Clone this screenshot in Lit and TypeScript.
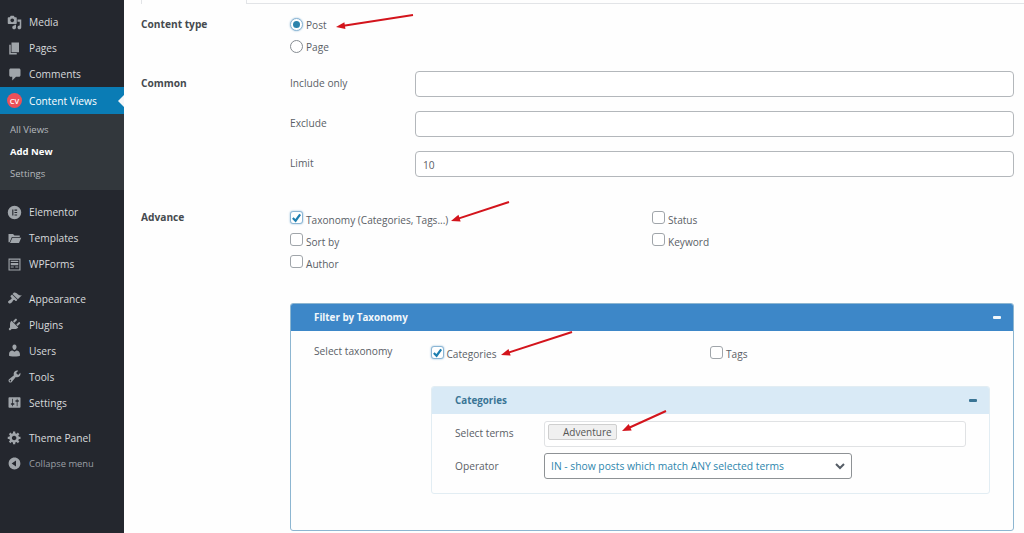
import { LitElement, html, css, svg } from "lit";
import { customElement } from "lit/decorators.js";

const P: Record<string, string> = {
  media: "M13 11V4c0-.55-.45-1-1-1h-1.67L9 1H5L3.67 3H2c-.55 0-1 .45-1 1v7c0 .55.45 1 1 1h10c.55 0 1-.45 1-1zM7 4.5c1.38 0 2.5 1.12 2.5 2.5S8.38 9.5 7 9.5 4.5 8.38 4.5 7 5.62 4.5 7 4.5zM14 6h5v10.5c0 1.38-1.12 2.5-2.5 2.5S14 17.88 14 16.5s1.12-2.5 2.5-2.5c.17 0 .34.02.5.05V9h-3V6zm-4 8.05V13h2v3.5c0 1.38-1.12 2.5-2.5 2.5S7 17.88 7 16.5 8.12 14 9.5 14c.17 0 .34.02.5.05z",
  pages: "M6 15V2h10v13H6zm-1 1h8v2H3V5h2v11z",
  comments: "M5 2h11c1.1 0 2 .9 2 2v7c0 1.1-.9 2-2 2h-4l-5 5v-5H5c-1.1 0-2-.9-2-2V4c0-1.1.9-2 2-2z",
  elementor: "M10 1a9 9 0 1 0 0 18 9 9 0 0 0 0-18zM7 6h1.5v8H7V6zm3 0h3.5v1.5H10V6zm0 3.2h3.5v1.5H10V9.200zm0 3.300h3.500V14H10v-1.500z",
  templates: "M2 4h6l2 2h7v2H6.500L3.500 15H2V4zm5.200 5H19l-3 7H4l3.200-7z",
  wpforms: "M2 2h16v16H2V2zm1.500 1.500v13h13v-13h-13zM5 5h10v1.500H5V5zm0 3h10v3H5V8zm0 4.500h4V14H5v-1.500zm6 0h4V14h-4v-1.500z",
  appearance: "M14.48 11.06L7.41 3.99l1.5-1.5c.5-.56 2.3-.47 3.51.32 1.21.8 1.43 1.28 2.91 2.1 1.18.64 2.45 1.26 4.45.85zm-.71.71L6.7 4.7 4.93 6.47c-.39.39-.39 1.02 0 1.41l1.06 1.06c.39.39.39 1.03 0 1.42-.6.6-1.43 1.11-2.21 1.69-.35.26-.7.53-1.01.84C1.43 13.23.87 14.81 2.1 16.04c1.23 1.23 2.81.67 4.15-.67.31-.31.58-.66.85-1.02.57-.78 1.08-1.61 1.69-2.21.39-.39 1.02-.39 1.41 0l1.06 1.06c.39.39 1.02.39 1.41 0z",
  plugins: "M13.11 4.36L9.87 7.6 8 5.73l3.24-3.24c.35-.34 1.05-.2 1.56.32.52.51.66 1.21.31 1.55zm-8 1.77l.91-1.12 9.01 9.01-1.19.84c-.71.71-2.63 1.16-3.82 1.16H6.14L4.9 17.26c-.59.59-1.54.59-2.12 0-.59-.58-.59-1.53 0-2.12l1.24-1.24v-3.88c0-1.13.4-3.19 1.09-3.89zm7.26 3.97l3.24-3.24c.34-.35 1.04-.21 1.55.31.52.51.66 1.21.31 1.55l-3.24 3.25z",
  users: "M10 9.25c-2.27 0-2.73-3.44-2.73-3.44C7 4.02 7.82 2 9.97 2c2.16 0 2.98 2.02 2.71 3.81 0 0-.41 3.44-2.68 3.44zm0 2.57L12.72 10c2.39 0 4.52 2.33 4.52 4.53v2.49s-3.65 1.13-7.24 1.13c-3.65 0-7.24-1.13-7.24-1.13v-2.49c0-2.25 1.94-4.48 4.47-4.48z",
  tools: "M16.68 9.77c-1.34 1.34-3.3 1.67-4.95.99l-5.41 6.52c-.99.99-2.59.99-3.58 0s-.99-2.59 0-3.57l6.52-5.42c-.68-1.65-.35-3.61.99-4.95 1.28-1.28 3.12-1.62 4.72-1.06l-2.89 2.89 2.82 2.82 2.86-2.87c.53 1.58.18 3.39-1.08 4.65zM3.81 16.21c.4.39 1.04.39 1.43 0 .4-.4.4-1.04 0-1.43-.39-.4-1.03-.4-1.43 0-.39.39-.39 1.03 0 1.43z",
  settings: "M18 16V4c0-.55-.45-1-1-1H3c-.55 0-1 .45-1 1v12c0 .55.45 1 1 1h14c.55 0 1-.45 1-1zM8 11h1c.55 0 1 .45 1 1s-.45 1-1 1H8v1.5c0 .28-.22.5-.5.5s-.5-.22-.5-.5V13H6c-.55 0-1-.45-1-1s.45-1 1-1h1V5.5c0-.28.22-.5.5-.5s.5.22.5.5V11zm5-2h-1c-.55 0-1-.45-1-1s.45-1 1-1h1V5.5c0-.28.22-.5.5-.5s.5.22.5.5V7h1c.55 0 1 .45 1 1s-.45 1-1 1h-1v5.5c0 .28-.22.5-.5.5s-.5-.22-.5-.5V9z",
  gear: "M18 12h-2.18c-.17.7-.44 1.35-.81 1.93l1.54 1.54-2.1 2.1-1.54-1.54c-.58.36-1.23.63-1.91.79V19H8v-2.18c-.68-.16-1.33-.43-1.91-.79l-1.54 1.54-2.12-2.12 1.54-1.54c-.36-.58-.63-1.23-.79-1.91H1V9.03h2.17c.16-.7.44-1.35.8-1.94L2.43 5.55l2.1-2.1 1.54 1.54c.58-.37 1.24-.64 1.93-.81V2h3v2.18c.68.16 1.33.43 1.91.79l1.54-1.54 2.12 2.12-1.54 1.54c.36.59.64 1.24.8 1.94H18V12zm-8.5 1.5c1.66 0 3-1.34 3-3s-1.34-3-3-3-3 1.34-3 3 1.34 3 3 3z",
  collapse: "M10 2.16c4.33 0 7.84 3.51 7.84 7.84s-3.51 7.84-7.84 7.84S2.16 14.33 2.16 10 5.71 2.16 10 2.16zm2 11.72V6.12L6.18 9.97z",
};

const icon = (k: string) =>
  html`<svg class="ico" viewBox="0 0 20 20"><path fill-rule="evenodd" d=${P[k]}></path></svg>`;

const arrows: [number, number, number, number][] = [
  [413, 15, 336, 27],
  [509, 202, 451, 221],
  [572, 332, 501, 355],
  [666, 411, 622, 431],
];

@customElement("app-root")
export class AppRoot extends LitElement {
  static styles = css`
    :host {
      display: block;
      position: relative;
      width: 1024px;
      height: 533px;
      overflow: hidden;
      background: #fefefe;
      font-family: "Open Sans", "Noto Sans", sans-serif;
      font-size: 10.2px;
      color: #5a6066;
    }
    * { box-sizing: border-box; }
    .layout { display: flex; height: 533px; }

    /* Sidebar */
    .side {
      width: 124px;
      flex: none;
      background: #24272e;
      padding-top: 9px;
      color: #d8dadc;
    }
    .item {
      display: flex;
      align-items: center;
      height: 26px;
      padding-left: 7px;
      gap: 7px;
      font-size: 10.2px;
      position: relative;
    }
    .ico { width: 15px; height: 15px; fill: #a0a5aa; flex: none; }
    .item.active { background: #0a7cb5; color: #fff; height: 27px; }
    .item.active::after {
      content: "";
      position: absolute;
      right: 0;
      top: 8px;
      border: 6px solid transparent;
      border-right-color: #f4f6f8;
      border-left-width: 0;
    }
    .cv {
      width: 15px;
      height: 15px;
      border-radius: 50%;
      background: #ec5058;
      color: #fff;
      font-size: 7.5px;
      font-weight: 600;
      display: flex;
      align-items: center;
      justify-content: center;
      flex: none;
    }
    .sub { background: #32373c; height: 76px; padding-top: 5px; }
    .sub div {
      height: 22px;
      line-height: 21px;
      padding-left: 10px;
      font-size: 9.5px;
      color: #b4b9be;
    }
    .sub .cur { color: #fff; font-weight: 700; }
    .group { margin-top: 8.5px; }
    .group.first { margin-top: 9px; }
    .group.last { margin-top: 9px; }
    .item.muted { color: #9a9fa4; font-size: 9.4px; }

    /* Main */
    .main { flex: 1; min-width: 0; padding: 0 10px 0 17px; }
    .tabs { height: 4px; display: flex; margin: 0 -10px 9px 0; }
    .tab { width: 106px; border: 1px solid #e2e4e7; border-width: 0 1px; }
    .tabline { flex: 1; border-bottom: 1px solid #e2e4e7; }
    .row { display: grid; grid-template-columns: 149px 1fr; }
    .head { font-weight: 700; color: #454a4f; line-height: 22px; font-size: 10.2px; }
    .opt { display: flex; align-items: center; gap: 3px; height: 22px; }
    .lbl { font-size: 10.1px; }
    .opt.radio-row .lbl { padding-top: 2px; }
    .opt.check-row .lbl { padding-top: 6px; }
    .opt.tight .lbl { padding-top: 3px; }
    .radio {
      width: 13px;
      height: 13px;
      border-radius: 50%;
      border: 1px solid #868c92;
      background: #fff;
      display: flex;
      align-items: center;
      justify-content: center;
      flex: none;
    }
    .radio.on { border-color: #8ab5d4; box-shadow: 0 0 2px #8ab5d4; }
    .radio.on::after {
      content: "";
      width: 7px;
      height: 7px;
      border-radius: 50%;
      background: #2c83ac;
    }
    .check {
      width: 13px;
      height: 13px;
      border-radius: 3px;
      border: 1px solid #a0a5aa;
      background: #fff;
      flex: none;
      display: flex;
      align-items: center;
      justify-content: center;
    }
    .check.on { border-color: #8ab5d4; box-shadow: 0 0 2px #8ab5d4; }
    .check svg { width: 11px; height: 11px; fill: none; stroke: #1e7fb0; stroke-width: 2.4; }

    .common { margin-top: 14px; }
    .common .head { line-height: 24px; }
    .fields { display: grid; grid-template-columns: 125px 1fr; row-gap: 14px; align-items: center; }
    .fields span { padding-bottom: 2px; }
    .text {
      height: 26px;
      width: 100%;
      border: 1px solid #b3b7bb;
      border-radius: 4px;
      background: #fff;
      padding: 2px 7px 0;
      font: inherit;
      color: #5a6066;
    }
    .advance { margin-top: 29px; }
    .adv { display: grid; grid-template-columns: 362px 1fr; }
    .adv .col { display: flex; flex-direction: column; }
    .panel {
      margin: 31px 0 0 149px;
      height: 228px;
      border: 1px solid #8db6d1;
      border-radius: 3px;
      overflow: hidden;
    }
    .phead {
      height: 27px;
      background: #3d87c8;
      color: #f2f7fb;
      font-weight: 700;
      font-size: 9.8px;
      display: flex;
      align-items: center;
      justify-content: space-between;
      padding: 0 12px 0 23px;
    }
    .minus { width: 8px; height: 3px; border-radius: 1px; background: currentColor; }
    .tax {
      display: grid;
      grid-template-columns: 116.5px 279.5px 1fr;
      align-items: center;
      margin: 10px 0 0 23px;
      height: 22px;
    }
    .tax > span { padding-bottom: 2px; }
    .inner {
      margin: 23px 23px 0 140px;
      height: 108px;
      border: 1px solid #e2edf3;
      border-radius: 3px;
      overflow: hidden;
    }
    .ihead {
      height: 27px;
      background: #d9eaf6;
      color: #3a7595;
      font-weight: 700;
      font-size: 9.8px;
      display: flex;
      align-items: center;
      justify-content: space-between;
      padding: 0 12px 0 23px;
    }
    .ibody {
      display: grid;
      grid-template-columns: 89px 1fr;
      row-gap: 6px;
      align-items: center;
      padding: 7px 23px 0;
    }
    .ibody > span:first-child { padding-bottom: 2px; }
    .terms {
      height: 26px;
      border: 1px solid #e0e2e4;
      border-radius: 3px;
      background: #fff;
      display: flex;
      align-items: flex-start;
      padding: 2px 0 0 3px;
    }
    .chip {
      width: 69px;
      height: 16px;
      border: 1px solid #cfcfcf;
      border-radius: 2px;
      background: #f0f0f0;
      color: #555;
      line-height: 14px;
      padding-left: 14px;
      font-size: 10px;
    }
    .select {
      width: 308px;
      height: 26px;
      border: 1px solid #8e9295;
      border-radius: 3px;
      background: #fff;
      color: #2d86ad;
      font-size: 10.3px;
      display: flex;
      align-items: center;
      justify-content: space-between;
      padding: 0 6px;
    }
    .select svg { width: 10px; height: 10px; fill: none; stroke: #555d66; stroke-width: 2; }

    .arrows { position: absolute; inset: 0; width: 1024px; height: 533px; pointer-events: none; }
    .arrows line { stroke: #d3141c; stroke-width: 2; }
    .arrows polygon { fill: #d3141c; }
  `;

  private item(k: string, label: string) {
    return html`<div class="item">${icon(k)}<span>${label}</span></div>`;
  }

  private checkbox(label: string, on = false, tight = false) {
    return html`<div class="opt ${tight ? "tight" : "check-row"}">
      <span class="check ${on ? "on" : ""}">${on
        ? html`<svg viewBox="0 0 12 12"><path d="M2 6.5l3 3 5-7"></path></svg>`
        : ""}</span><span class="lbl">${label}</span>
    </div>`;
  }

  private arrow([x1, y1, x2, y2]: [number, number, number, number]) {
    const a = Math.atan2(y2 - y1, x2 - x1);
    const pt = (d: number, s: number) =>
      `${x2 - d * Math.cos(a) - s * Math.sin(a)},${y2 - d * Math.sin(a) + s * Math.cos(a)}`;
    return svg`<line x1=${x1} y1=${y1} x2=${x2 - 6 * Math.cos(a)} y2=${y2 - 6 * Math.sin(a)}></line>
      <polygon points="${x2},${y2} ${pt(9, 3.5)} ${pt(9, -3.5)}"></polygon>`;
  }

  render() {
    return html`
      <div class="layout">
        <nav class="side">
          ${this.item("media", "Media")}
          ${this.item("pages", "Pages")}
          ${this.item("comments", "Comments")}
          <div class="item active"><span class="cv">CV</span><span>Content Views</span></div>
          <div class="sub">
            <div>All Views</div>
            <div class="cur">Add New</div>
            <div>Settings</div>
          </div>
          <div class="group first">
            ${this.item("elementor", "Elementor")}
            ${this.item("templates", "Templates")}
            ${this.item("wpforms", "WPForms")}
          </div>
          <div class="group">
            ${this.item("appearance", "Appearance")}
            ${this.item("plugins", "Plugins")}
            ${this.item("users", "Users")}
            ${this.item("tools", "Tools")}
            ${this.item("settings", "Settings")}
          </div>
          <div class="group last">
            ${this.item("gear", "Theme Panel")}
            <div class="item muted">${icon("collapse")}<span>Collapse menu</span></div>
          </div>
        </nav>

        <main class="main">
          <div class="tabs"><div class="tab"></div><div class="tabline"></div></div>

          <section class="row">
            <div class="head">Content type</div>
            <div>
              <div class="opt radio-row"><span class="radio on"></span><span class="lbl">Post</span></div>
              <div class="opt radio-row"><span class="radio"></span><span class="lbl">Page</span></div>
            </div>
          </section>

          <section class="row common">
            <div class="head">Common</div>
            <div class="fields">
              <span>Include only</span><input class="text" />
              <span>Exclude</span><input class="text" />
              <span>Limit</span><input class="text" value="10" />
            </div>
          </section>

          <section class="row advance">
            <div class="head">Advance</div>
            <div class="adv">
              <div class="col">
                ${this.checkbox("Taxonomy (Categories, Tags...)", true)}
                ${this.checkbox("Sort by")}
                ${this.checkbox("Author")}
              </div>
              <div class="col">
                ${this.checkbox("Status")}
                ${this.checkbox("Keyword")}
              </div>
            </div>
          </section>

          <section class="panel">
            <div class="phead"><span>Filter by Taxonomy</span><span class="minus"></span></div>
            <div class="tax">
              <span>Select taxonomy</span>
              ${this.checkbox("Categories", true, true)}
              ${this.checkbox("Tags", false, true)}
            </div>
            <div class="inner">
              <div class="ihead"><span>Categories</span><span class="minus"></span></div>
              <div class="ibody">
                <span>Select terms</span>
                <div class="terms"><span class="chip">Adventure</span></div>
                <span>Operator</span>
                <div class="select">
                  <span>IN - show posts which match ANY selected terms</span>
                  <svg viewBox="0 0 10 10"><path d="M1 3l4 4 4-4"></path></svg>
                </div>
              </div>
            </div>
          </section>
        </main>
      </div>
      <svg class="arrows" viewBox="0 0 1024 533">${arrows.map((a) => this.arrow(a))}</svg>
    `;
  }
}
